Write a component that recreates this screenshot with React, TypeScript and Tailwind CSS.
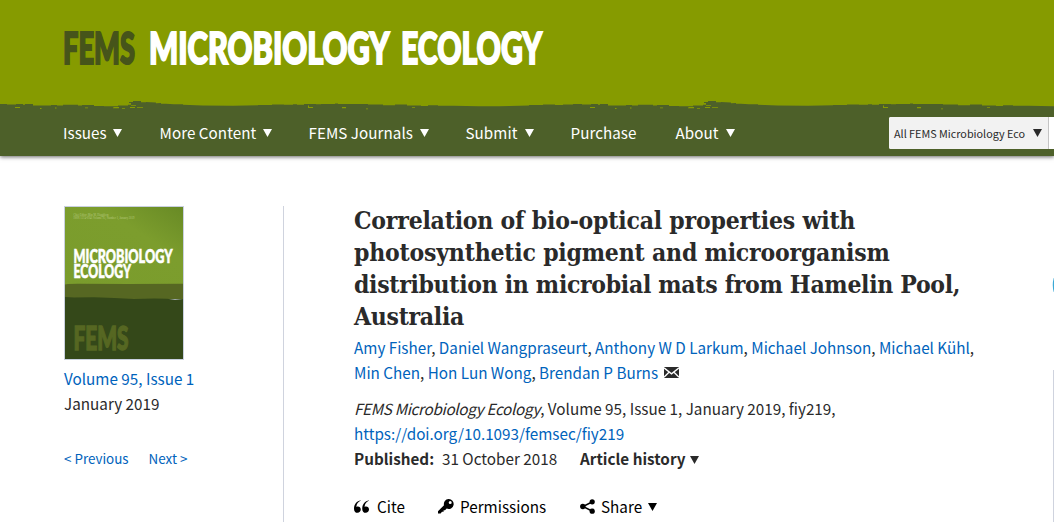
const NAV = [
  { label: "Issues", menu: true, width: "w-[96.5px]", text: "w-[43px]" },
  { label: "More Content", menu: true, width: "w-[149px]", text: "w-[96px]" },
  { label: "FEMS Journals", menu: true, width: "w-[157px]", text: "w-[104px]" },
  { label: "Submit", menu: true, width: "w-[105px]", text: "w-[52px]" },
  { label: "Purchase", menu: false, width: "w-[105px]", text: "w-[66px]" },
  { label: "About", menu: true, width: "w-[80px]", text: "w-[43px]" },
];

const AUTHORS = [
  ["Amy Fisher", "Daniel Wangpraseurt", "Anthony W D Larkum", "Michael Johnson", "Michael Kühl"],
  ["Min Chen", "Hon Lun Wong", "Brendan P Burns"],
];

const TITLE = [
  { text: "Correlation of bio-optical properties with", spacing: "tracking-[-0.21px]" },
  { text: "photosynthetic pigment and microorganism", spacing: "tracking-[-0.2px]" },
  { text: "distribution in microbial mats from Hamelin Pool,", spacing: "tracking-[-0.31px]" },
  { text: "Australia", spacing: "tracking-[-0.3px]" },
];

function Caret({ className }: { className: string }) {
  return (
    <svg viewBox="0 0 10 9" preserveAspectRatio="none" className={className} fill="currentColor">
      <path d="M0 0h10L5 9z" />
    </svg>
  );
}

// rough painted edge between the banner and the nav bar
function BrushEdge() {
  return (
    <svg className="block h-4 w-full" viewBox="0 0 1054 16" preserveAspectRatio="none">
      <defs>
        <pattern id="brush" width="575" height="16" patternUnits="userSpaceOnUse">
          <path
            fill="#4d6029"
            d="M0 6h7v.6h9V6h7v.8h2V6h8v1.500h18v-.6h6v.6h6v-.7h15v.8h4v-.6h12v.9h10v.4h14v-.8h10v-.7h3V5h-2V4h4V3h8v1.200h5v-.2l10 .5v.7l5-.1v.7h5l8 .5h9v.5l20 .6 30 .3 25-.4v-.4h14V6.500h12v.3h9v-.5h4v.4h7V6h12v.3h5V6h14v-.5h3V6h30v.6h15v.6h12V6.600h12v.9h14v.6h7v-.8h10v.4h16l25 .5h20l30-.6v-.5h14V6.500h12v.5h8v-.6h10V6h20v-.6h8V6h7V16H0z"
          />
          <path
            fill="#869b00"
            d="M15 9h5v1h-5zM40 10h1.500v1H40zM55 9.500h1.500v1H55zM85 9.500h3v.8h-3zM114 9h5v1.300h-6v-.6zM122 10h3v.8h-3zM131 7.200h5v.8h-5zM130 9h5v1h-5zM137 9h6v.8h-6zM308 7.500h1v1.500h4v1h-5zM342 9h4v1.300h-4zM366 10.500h2v.8h-2zM412 9h3v.8h-3z"
          />
        </pattern>
      </defs>
      <rect width="1054" height="16" fill="#869b00" />
      <rect width="1054" height="16" fill="url(#brush)" />
    </svg>
  );
}

function Cover() {
  return (
    <svg width="120" height="154" viewBox="0 0 120 154" className="block">
      <defs>
        <linearGradient id="leaf" x1="0" y1="1" x2="1" y2="0">
          <stop offset="0" stopColor="#7a9c2c" />
          <stop offset=".65" stopColor="#7c9d2d" />
          <stop offset="1" stopColor="#688a25" />
        </linearGradient>
      </defs>
      <rect width="120" height="154" fill="#c9d0df" />
      <rect x="1" y="1" width="118" height="78" fill="url(#leaf)" />
      <path d="M1 78.500l3-.5 10-.3 50 .3 55-.3V93H1z" fill="#566722" />
      <path d="M1 91l9 .5 20-.2 20 .8 20 .8 20-.5 13 .4 8 1 8-.8V153H1z" fill="#344819" />
      <g fontFamily="Liberation Serif, serif" fontSize="3.500" fill="#b4c97e">
        <text x="9.500" y="9.500" textLength="35" lengthAdjust="spacingAndGlyphs">Chief Editor: Max M. Häggblom</text>
        <text x="9.500" y="13" textLength="61" lengthAdjust="spacingAndGlyphs">ISSN 1574-6941 Volume 95, Number 1, January 2019</text>
      </g>
      <g fontFamily="Lato, sans-serif" fontWeight="900" fill="#fff" stroke="#fff" strokeWidth=".6" fontSize="18.500">
        <text x="9.500" y="56.500" textLength="99" lengthAdjust="spacingAndGlyphs">MICROBIOLOGY</text>
        <text x="9.500" y="71.500" textLength="57.500" lengthAdjust="spacingAndGlyphs">ECOLOGY</text>
      </g>
      <text
        x="9.500"
        y="143.500"
        textLength="55"
        lengthAdjust="spacingAndGlyphs"
        fontFamily="Lato, sans-serif"
        fontWeight="900"
        fontSize="33"
        fill="#566722"
        stroke="#566722"
        strokeWidth="1.500"
      >
        FEMS
      </text>
    </svg>
  );
}

function QuoteIcon() {
  return (
    <svg width="15" height="13" viewBox="0 0 15.500 13" fill="currentColor">
      <path d="M7 0C3 .7 0 4.200 0 8.700 0 11.400 1.400 13 3.600 13 5.500 13 7 11.600 7 9.700 7 7.900 5.700 6.600 4 6.600 3.400 6.600 3 6.700 2.400 6.900 2.700 4.100 4.200 1.700 7 .4zM15.500 0C11.500 .7 8.500 4.200 8.500 8.700c0 2.700 1.400 4.300 3.600 4.300 1.900 0 3.400-1.400 3.400-3.300 0-1.800-1.300-3.100-3-3.100-.6 0-1 .1-1.600.3.300-2.800 1.800-5.200 4.600-6.500z" />
    </svg>
  );
}

function KeyIcon() {
  return (
    <svg width="16" height="15" viewBox="0 0 16 15" fill="currentColor">
      <path
        fillRule="evenodd"
        d="M10.500 0a5 5 0 1 1-1.800 9.600L7 11.200H5.600v1.500H4L2.600 14.500H0v-2.300l6-6A5 5 0 0 1 10.500 0zm1.700 2a1.500 1.500 0 1 0 0 3 1.500 1.500 0 0 0 0-3z"
      />
    </svg>
  );
}

function ShareIcon() {
  return (
    <svg width="15" height="15" viewBox="0 0 15 15" fill="currentColor">
      <path d="M12 3L3 7.500l9 4.500" fill="none" stroke="currentColor" strokeWidth="1.500" />
      <circle cx="12.200" cy="2.800" r="2.600" />
      <circle cx="2.800" cy="7.500" r="2.700" />
      <circle cx="12.200" cy="12.200" r="2.600" />
    </svg>
  );
}

function MailIcon() {
  return (
    <svg width="15" height="11" viewBox="0 0 15 11" className="ml-1.5">
      <rect width="15" height="11" fill="#2a2a2a" />
      <path d="M0 .8l7.500 6L15 .8M0 10.200l5-5M15 10.200l-5-5" fill="none" stroke="#fff" strokeWidth="1.300" />
    </svg>
  );
}

export default function App() {
  return (
    <div className="h-[522px] w-[1054px] overflow-hidden bg-white font-['Noto_Sans_CJK_SC',sans-serif] text-[15.25px] leading-[25px] text-[#2a2a2a]">
      <header className="h-[156px] bg-[#869b00] shadow-[0_1px_4px_rgba(0,0,0,0.6)]">
        <div className="h-[98px]">
          <svg width="1054" height="98" fontFamily="Lato, sans-serif" fontWeight="900" fontSize="43.500" strokeWidth="2">
            <text x="63" y="64" textLength="72" lengthAdjust="spacingAndGlyphs" fill="#46541a" stroke="#46541a">FEMS</text>
            <text x="149" y="64" textLength="240.500" lengthAdjust="spacingAndGlyphs" fill="#fff" stroke="#fff">MICROBIOLOGY</text>
            <text x="401" y="64" textLength="141" lengthAdjust="spacingAndGlyphs" fill="#fff" stroke="#fff">ECOLOGY</text>
          </svg>
        </div>
        <BrushEdge />
        <nav className="flex h-[42px] items-start bg-[#4d6029] pl-[63px] text-[15.2px] text-white">
          {NAV.map((item) => (
            <a key={item.label} className={`flex shrink-0 items-center pt-[6px] whitespace-nowrap ${item.width}`}>
              <span className={`tracking-[0.05px] ${item.text}`}>{item.label}</span>
              {item.menu && <Caret className="ml-[7px] h-2 w-[9px] shrink-0" />}
            </a>
          ))}
          <div className="ml-auto mt-[3px] flex h-8 w-[165px] shrink-0 rounded-l-[2px] bg-white">
            <div className="flex w-[160px] items-center rounded-l-[2px] border-r border-[#c4c4c4] bg-[#f2f2f2] pl-[5px] text-[10.8px] text-[#2a2a2a]">
              <span className="w-[139px] whitespace-nowrap">All FEMS Microbiology Eco</span>
              <Caret className="h-2 w-[9px]" />
            </div>
          </div>
        </nav>
      </header>

      <div className="flex pt-[50px] pl-16">
        <aside className="h-[316px] w-[220px] shrink-0 border-r border-[#cfd3de]">
          <Cover />
          <div className="pt-[6px]">
            <a className="block text-[#0063bc]">Volume 95, Issue 1</a>
            <span className="block">January 2019</span>
          </div>
          <div className="flex gap-5 pt-[30px] text-[13.4px] text-[#0063bc]">
            <a>&lt; Previous</a>
            <a>Next &gt;</a>
          </div>
        </aside>

        <main className="w-[699px] shrink-0 pl-[70px]">
          <h1 className="-mt-px font-['DejaVu_Serif_Condensed','DejaVu_Serif',serif] text-[24.5px] leading-8 font-bold whitespace-nowrap">
            {TITLE.map((line) => (
              <span key={line.text} className={`block ${line.spacing}`}>{line.text}</span>
            ))}
          </h1>
          <div className="pt-[2px] whitespace-nowrap">
            {AUTHORS.map((row, i) => (
              <div key={i} className="flex items-center">
                <span>
                  {row.map((name, j) => (
                    <span key={name}>
                      <a className="text-[#0063bc]">{name}</a>
                      {i === 1 && j === row.length - 1 ? "" : ", "}
                    </span>
                  ))}
                </span>
                {i === 1 && <MailIcon />}
              </div>
            ))}
          </div>
          <div className="pt-[11px] whitespace-nowrap">
            <div>
              <em className="tracking-[-0.32px]">FEMS Microbiology Ecology</em>, Volume 95, Issue 1, January 2019, fiy219,
            </div>
            <a className="block text-[#0063bc]">https://doi.org/10.1093/femsec/fiy219</a>
            <div className="flex items-center">
              <b className="w-[88px]">Published:</b>
              <span className="w-[138px]">31 October 2018</span>
              <b className="w-[110px]">Article history</b>
              <Caret className="mt-[3px] h-2 w-[9px]" />
            </div>
          </div>
          <div className="flex items-center pt-[23px] text-black">
            <a className="flex w-[84px] items-center gap-2">
              <QuoteIcon />
              Cite
            </a>
            <a className="flex w-[142px] items-center gap-[6px]">
              <KeyIcon />
              Permissions
            </a>
            <a className="flex items-center gap-[6px]">
              <ShareIcon />
              Share
              <Caret className="h-2 w-[9px]" />
            </a>
          </div>
        </main>

        {/* right rail, cut off by the window edge */}
        <div className="flex w-[71px] shrink-0 flex-col items-end">
          <svg width="2" height="14" className="mt-[72px]">
            <path d="M2.500 0Q.5 7 2.500 14" fill="none" stroke="#3ba9d6" strokeWidth="1.500" />
          </svg>
          <div className="mt-[78px] h-[152px] w-px bg-[#cfd3de]" />
        </div>
      </div>
    </div>
  );
}
